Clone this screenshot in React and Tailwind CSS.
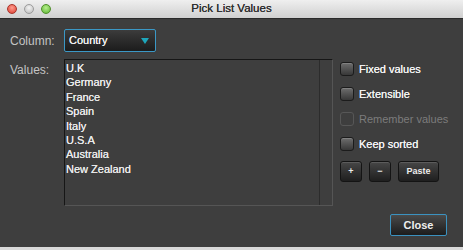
import React from 'react';

const values = ['U.K', 'Germany', 'France', 'Spain', 'Italy', 'U.S.A', 'Australia', 'New Zealand'];

const options = [
  { label: 'Fixed values' },
  { label: 'Extensible' },
  { label: 'Remember values', disabled: true },
  { label: 'Keep sorted' },
];

const Checkbox = ({ label, disabled }) => (
  <div className="flex items-center h-[14px] gap-[5px]">
    {disabled ? (
      <span className="w-[14px] h-[14px] rounded-[3px] border border-[#575757]" />
    ) : (
      <span className="w-[14px] h-[14px] rounded-[3px] border border-[#1b1b1b] bg-linear-to-b from-[#6e6e6e] to-[#383838] shadow-[inset_0_1px_0_rgba(255,255,255,0.15)]" />
    )}
    <span className={disabled ? 'text-[11px] text-[#7c7c7c]' : 'text-[11px] text-[#f2f2f2] [text-shadow:0_0_0.6px_#fff]'}>
      {label}
    </span>
  </div>
);

const SmallButton = ({ children, width }) => (
  <button className={`${width} h-[21px] rounded-[3px] border border-[#141414] bg-linear-to-b from-[#474747] to-[#1f1f1f] shadow-[inset_0_1px_0_rgba(255,255,255,0.12)] text-[9px] font-bold text-[#ececec] flex items-center justify-center`}>
    {children}
  </button>
);

export default function App() {
  return (
    <div className="w-[463px] h-[250px] flex flex-col font-['Liberation_Sans',Arial,sans-serif] bg-[#3e3e3e]">
      {/* title bar */}
      <div className="relative h-[19px] bg-linear-to-b from-[#efefef] to-[#d0d0d0] border-b border-[#2a2a2a] flex items-center justify-center">
        <div className="absolute left-[7px] top-[4px] flex gap-[7px]">
          <span className="w-[10px] h-[10px] rounded-full border border-[#a8332a] bg-[radial-gradient(circle_at_50%_35%,#ff9d8f,#dc3b2d)]" />
          <span className="w-[10px] h-[10px] rounded-full border border-[#9c9c9c] bg-[radial-gradient(circle_at_50%_35%,#f4f4f4,#b9b9b9)]" />
          <span className="w-[10px] h-[10px] rounded-full border border-[#4f8f2a] bg-[radial-gradient(circle_at_50%_35%,#b6ef8c,#5cb332)]" />
        </div>
        <span className="text-[11.5px] text-[#2e2e2e] leading-none [text-shadow:0_0_0.4px_#2e2e2e]">Pick List Values</span>
      </div>

      {/* body */}
      <div className="flex-1 flex flex-col px-[10px] pt-[10px]">
        <div className="flex items-center">
          <span className="w-[54px] text-[12px] text-[#c4c4c4]">Column:</span>
          <div className="w-[92px] h-[23px] rounded-[2px] border border-[#3b98c6] bg-linear-to-b from-[#3c3c3c] to-[#1c1c1c] flex items-center justify-between pl-[4px] pr-[6px]">
            <span className="text-[11px] text-[#f0f0f0] [text-shadow:0_0_0.5px_#fff]">Country</span>
            <svg width="8" height="6" viewBox="0 0 8 6">
              <path d="M0 0 H8 L4 6 Z" fill="#1ea6bb" />
            </svg>
          </div>
        </div>

        <div className="flex mt-[7px]">
          <span className="w-[54px] pt-[2px] text-[12px] text-[#c4c4c4]">Values:</span>
          <div className="w-[269px] h-[147px] flex border-t border-l border-[#161616] border-r border-b border-r-[#555] border-b-[#555]">
            <div className="flex-1 pl-[1px] pt-[1px] flex flex-col">
              {values.map((v) => (
                <span key={v} className="h-[14.4px] leading-[14.4px] text-[11px] text-[#e8e8e8] [text-shadow:0_0_0.5px_#fff]">
                  {v}
                </span>
              ))}
            </div>
            <div className="w-[13px] border-l border-[#2c2c2c]" />
          </div>
          <div className="ml-[7px] pt-[3px] flex flex-col">
            <div className="flex flex-col gap-[11px]">
              {options.map((o) => (
                <Checkbox key={o.label} label={o.label} disabled={o.disabled} />
              ))}
            </div>
            <div className="flex gap-[7px] mt-[10px]">
              <SmallButton width="w-[22px]">+</SmallButton>
              <SmallButton width="w-[22px]">−</SmallButton>
              <SmallButton width="w-[41px]">Paste</SmallButton>
            </div>
          </div>
        </div>

        <div className="flex justify-end mt-[8px] mr-[6px]">
          <button className="w-[57px] h-[22px] rounded-[2px] border border-[#3b92c0] bg-linear-to-b from-[#4a4a4a] to-[#1d1d1d] text-[11px] font-bold text-[#eeeeee] flex items-center justify-center">
            Close
          </button>
        </div>
      </div>

      <div className="h-[3px] bg-[#d9d9d9]" />
    </div>
  );
}
